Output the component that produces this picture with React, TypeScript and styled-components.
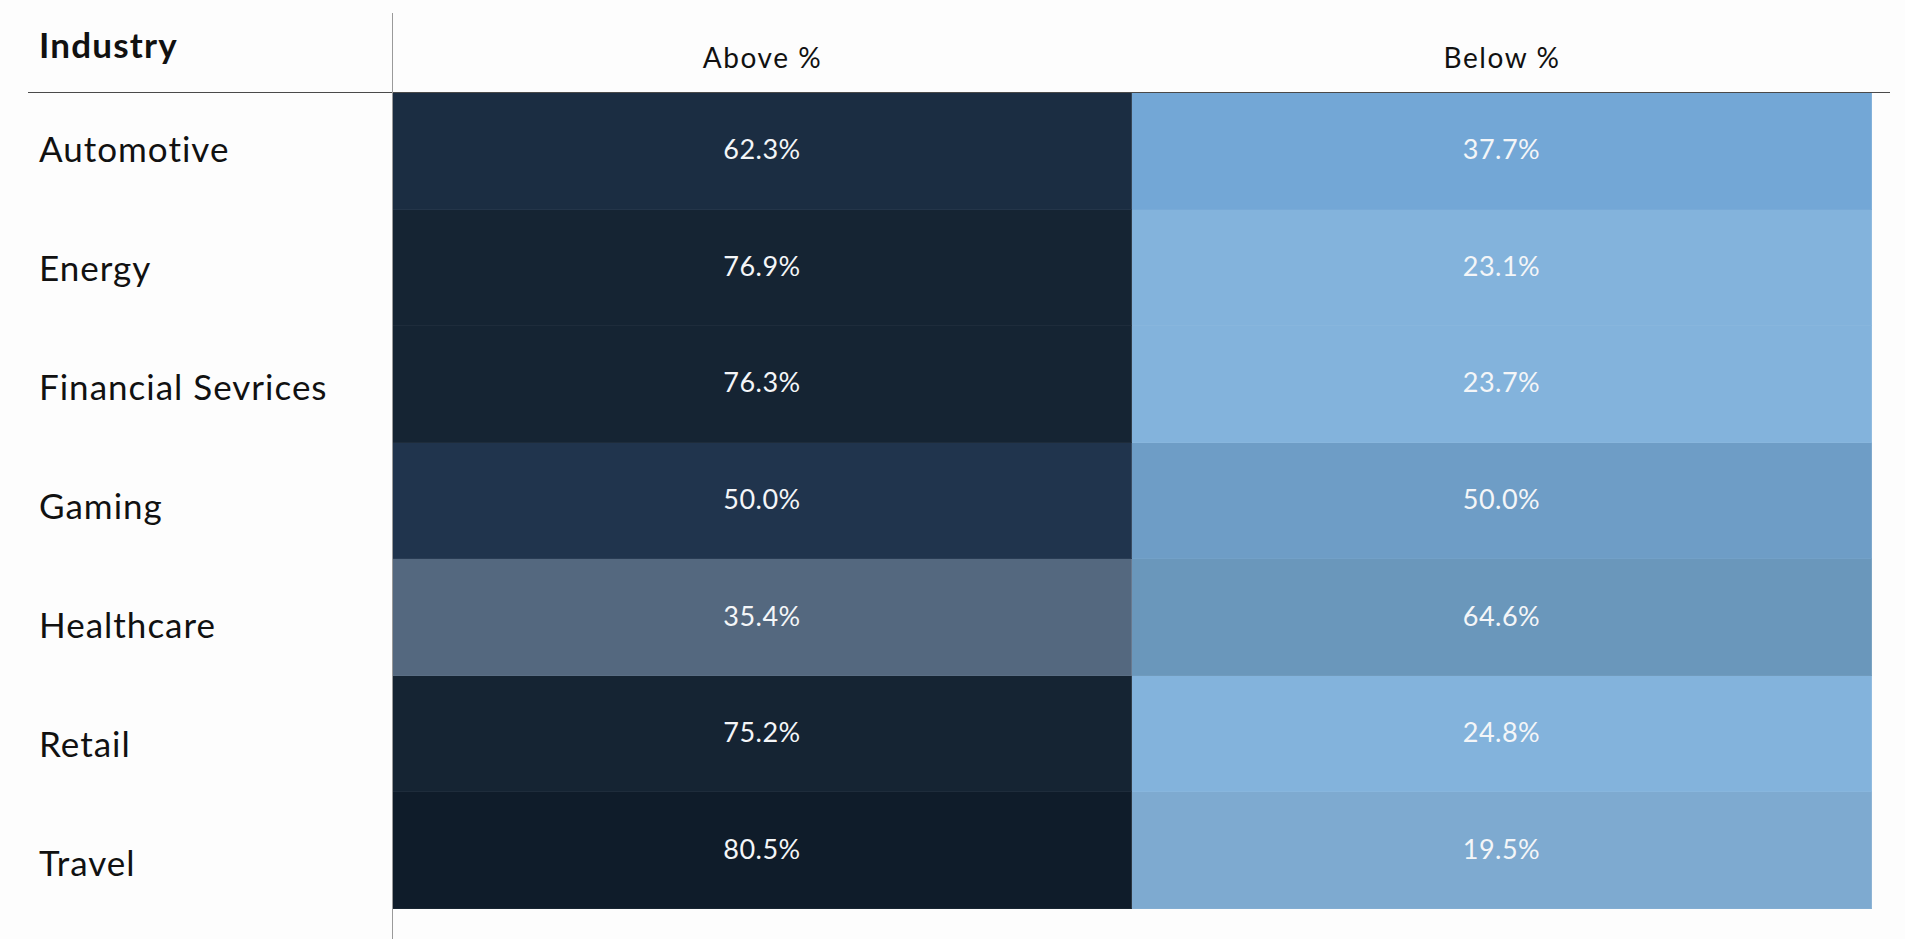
import styled, { createGlobalStyle } from 'styled-components'

const GlobalStyle = createGlobalStyle`
  body {
    margin: 0;
    background: #fdfdfd;
    font-family: Lato, 'Open Sans', sans-serif;
    color: #111;
  }
`

const Chart = styled.div`
  display: grid;
  grid-template-columns: 364px 1fr;
  margin: 13px 15px 0 28px;
  min-height: calc(100vh - 13px);
`

const Axis = styled.div`
  display: flex;
  flex-direction: column;
`

const AxisTitle = styled.div`
  height: 80px;
  box-sizing: border-box;
  display: flex;
  align-items: center;
  padding: 0 0 18px 11px;
  border-bottom: 1px solid #4a4a4a;
  font-size: 35px;
  font-weight: 700;
  letter-spacing: 1.2px;
  color: #111;
`

const AxisLabel = styled.div`
  height: 119px;
  box-sizing: border-box;
  display: flex;
  align-items: center;
  padding: 0 0 10px 11px;
  font-size: 35px;
  letter-spacing: 1px;
  color: #111;
`

const Plot = styled.div`
  border-left: 1px solid #9a9a9a;
  display: flex;
  flex-direction: column;
`

const HeaderRow = styled.div`
  height: 80px;
  box-sizing: border-box;
  display: grid;
  grid-template-columns: 739px 740px;
  border-bottom: 1px solid #4a4a4a;
`

const ColumnTitle = styled.div`
  display: flex;
  align-items: center;
  justify-content: center;
  padding-top: 8px;
  font-size: 28px;
  letter-spacing: 1.6px;
  color: #111;
`

const Heatmap = styled.div`
  display: grid;
  grid-template-columns: 739px 740px;
  grid-template-rows: repeat(7, 1fr);
  height: 816px;
`

const Cell = styled.div<{ $bg: string }>`
  display: flex;
  align-items: center;
  justify-content: center;
  padding-bottom: 4px;
  box-sizing: border-box;
  background: ${(p) => p.$bg};
  border-right: 1px solid rgba(255, 255, 255, 0.12);
  border-bottom: 1px solid rgba(255, 255, 255, 0.04);
  color: #f4f6f8;
  font-size: 27px;
  letter-spacing: 0.5px;
`

interface IRow {
  name: string
  above: number
  below: number
  aboveBg: string
  belowBg: string
}

const rows: IRow[] = [
  { name: 'Automotive', above: 62.3, below: 37.7, aboveBg: '#1b2d42', belowBg: '#73a7d6' },
  { name: 'Energy', above: 76.9, below: 23.1, aboveBg: '#152433', belowBg: '#83b3dc' },
  { name: 'Financial Sevrices', above: 76.3, below: 23.7, aboveBg: '#152433', belowBg: '#83b3dc' },
  { name: 'Gaming', above: 50.0, below: 50.0, aboveBg: '#20344d', belowBg: '#6e9dc6' },
  { name: 'Healthcare', above: 35.4, below: 64.6, aboveBg: '#54687f', belowBg: '#6a97bb' },
  { name: 'Retail', above: 75.2, below: 24.8, aboveBg: '#152433', belowBg: '#83b3dc' },
  { name: 'Travel', above: 80.5, below: 19.5, aboveBg: '#0f1c2a', belowBg: '#7eaad0' },
]

function App() {
  return (
    <>
      <GlobalStyle />
      <Chart>
        <Axis>
          <AxisTitle>Industry</AxisTitle>
          {rows.map((r) => (
            <AxisLabel key={r.name}>{r.name}</AxisLabel>
          ))}
        </Axis>
        <Plot>
          <HeaderRow>
            <ColumnTitle>Above %</ColumnTitle>
            <ColumnTitle>Below %</ColumnTitle>
          </HeaderRow>
          <Heatmap>
            {rows.flatMap((r) => [
              <Cell key={r.name + '-a'} $bg={r.aboveBg}>
                {r.above.toFixed(1)}%
              </Cell>,
              <Cell key={r.name + '-b'} $bg={r.belowBg}>
                {r.below.toFixed(1)}%
              </Cell>,
            ])}
          </Heatmap>
        </Plot>
      </Chart>
    </>
  )
}

export default App
